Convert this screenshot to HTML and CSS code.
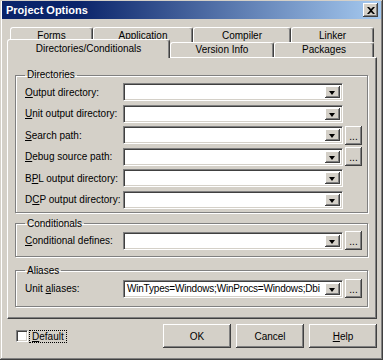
FILE: index.html
```html
<!DOCTYPE html>
<html lang="en">
  <head>
    <meta charset="UTF-8" />
    <title>Project Options</title>
    <link rel="stylesheet" href="styles.css">
  </head>
  <body>
    <div class="window">
      <div class="titlebar">
        <span class="title">Project Options</span>
        <button class="close-btn" aria-label="Close">
          <svg width="8" height="7" viewBox="0 0 8 7">
            <path d="M0 0h2l2 2 2-2h2L5 3.5 8 7H6L4 5 2 7H0l3-3.5z" fill="#000" />
          </svg>
        </button>
      </div>

      <div class="client">
        <div class="tabs">
          <div class="tab-row back">
            <div class="tab tab-forms">Forms</div>
            <div class="tab tab-application">Application</div>
            <div class="tab tab-compiler">Compiler</div>
            <div class="tab tab-linker">Linker</div>
          </div>
          <div class="tab-row front">
            <div class="tab active tab-dirs">Directories/Conditionals</div>
            <div class="tab tab-version">Version Info</div>
            <div class="tab tab-packages">Packages</div>
          </div>
        </div>

        <div class="panel">
          <fieldset class="group group-dirs">
            <legend>Directories</legend>
            <div class="row">
              <label><u>O</u>utput directory:</label>
              <div class="combo"><span class="value"></span><span class="drop"></span></div>
            </div>
            <div class="row">
              <label><u>U</u>nit output directory:</label>
              <div class="combo"><span class="value"></span><span class="drop"></span></div>
            </div>
            <div class="row">
              <label><u>S</u>earch path:</label>
              <div class="combo"><span class="value"></span><span class="drop"></span></div>
              <button class="browse">...</button>
            </div>
            <div class="row">
              <label><u>D</u>ebug source path:</label>
              <div class="combo"><span class="value"></span><span class="drop"></span></div>
              <button class="browse">...</button>
            </div>
            <div class="row">
              <label>B<u>P</u>L output directory:</label>
              <div class="combo"><span class="value"></span><span class="drop"></span></div>
            </div>
            <div class="row">
              <label>D<u>C</u>P output directory:</label>
              <div class="combo"><span class="value"></span><span class="drop"></span></div>
            </div>
          </fieldset>

          <fieldset class="group group-cond">
            <legend>Conditionals</legend>
            <div class="row">
              <label><u>C</u>onditional defines:</label>
              <div class="combo"><span class="value"></span><span class="drop"></span></div>
              <button class="browse">...</button>
            </div>
          </fieldset>

          <fieldset class="group group-alias">
            <legend>Aliases</legend>
            <div class="row">
              <label>Unit <u>a</u>liases:</label>
              <div class="combo">
                <span class="value">WinTypes=Windows;WinProcs=Windows;Dbi</span>
                <span class="drop"></span>
              </div>
              <button class="browse">...</button>
            </div>
          </fieldset>
        </div>

        <div class="footer">
          <label class="check">
            <span class="check-box"></span>
            <span class="check-label"><u>D</u>efault</span>
          </label>
          <div class="buttons">
            <button class="btn">OK</button>
            <button class="btn">Cancel</button>
            <button class="btn"><u>H</u>elp</button>
          </div>
        </div>
      </div>
    </div>
  </body>
</html>
```

FILE: styles.css
```css
:root {
  --clr-face: #d4d0c8;
  --clr-shadow: #808080;
  --clr-dark: #404040;
  --clr-light: #ffffff;
}

* {
  margin: 0;
  padding: 0;
  box-sizing: border-box;
}

body {
  font-family: "Liberation Sans", Arial, sans-serif;
  font-size: 10px;
  color: #000;
  background-color: var(--clr-face);
}

button {
  font: inherit;
  color: inherit;
}

.window {
  width: 383px;
  height: 360px;
  padding: 1px 2px 2px 2px;
  background-color: var(--clr-face);
  box-shadow: inset -1px -1px var(--clr-dark), inset 1px 1px var(--clr-face),
    inset -2px -2px var(--clr-shadow), inset 2px 2px var(--clr-light);
}

/* title bar */

.titlebar {
  height: 18px;
  display: flex;
  align-items: center;
  padding-left: 4px;
  background: linear-gradient(to right, #0a246a 20%, #a6caf0);
}

.title {
  flex: 1;
  color: #fff;
  font-size: 11px;
  font-weight: bold;
}

.close-btn {
  width: 15px;
  height: 14px;
  margin-right: 3px;
  display: flex;
  align-items: center;
  justify-content: center;
  border: none;
  background-color: var(--clr-face);
  box-shadow: inset -1px -1px var(--clr-dark), inset 1px 1px var(--clr-light),
    inset -2px -2px var(--clr-shadow);
}

/* tabs */

.client {
  padding: 0 4px 0 5px;
}

.tabs {
  margin-top: 8px;
}

.tab-row {
  display: flex;
  height: 15px;
}

.tab-row.back {
  padding-left: 3px;
}

.tab-row.back .tab {
  padding-top: 2px;
}

.tab-row.front {
  align-items: flex-end;
}

.tab {
  height: 15px;
  padding-top: 1px;
  text-align: center;
  line-height: 12px;
  white-space: nowrap;
  background-color: var(--clr-face);
  border: 1px solid;
  border-bottom: none;
  border-color: var(--clr-light) var(--clr-dark) transparent var(--clr-light);
  border-radius: 3px 3px 0 0;
  box-shadow: inset -1px 0 var(--clr-shadow);
}

.tab-forms { width: 83px; }
.tab-application { width: 100px; }
.tab-compiler { width: 98px; }
.tab-linker { width: 83px; }

.tab-dirs { width: 163px; }
.tab-version { width: 104px; }
.tab-packages { width: 100px; }

.tab.active {
  height: 19px;
  margin-bottom: -1px;
  padding-top: 3px;
}

/* tab page */

.panel {
  height: 262px;
  padding: 11px 9px 0 7px;
  border: 1px solid;
  border-color: var(--clr-light) var(--clr-dark) var(--clr-dark) var(--clr-light);
  box-shadow: inset -1px -1px var(--clr-shadow);
}

.group {
  border: 1px solid var(--clr-shadow);
  box-shadow: inset 1px 1px var(--clr-light), 1px 1px var(--clr-light);
  padding: 2px 5px 3px 9px;
}

.group legend {
  padding: 0 2px;
  line-height: 12px;
}

.group-dirs {
  display: flex;
  flex-direction: column;
  gap: 3.6px;
}

.group-cond {
  margin-top: 5px;
  padding-bottom: 6px;
}

.group-alias {
  margin-top: 8px;
  padding-top: 3px;
  padding-bottom: 8px;
}

.row {
  display: flex;
  align-items: center;
  height: 18px;
}

.row label {
  width: 98px;
  white-space: nowrap;
}

.combo {
  width: 220px;
  height: 18px;
  display: flex;
  align-items: stretch;
  background-color: #fff;
  border: 1px solid;
  border-color: var(--clr-shadow) var(--clr-light) var(--clr-light) var(--clr-shadow);
  box-shadow: inset 1px 1px var(--clr-dark), inset -1px -1px var(--clr-face);
  padding: 2px;
}

.combo .value {
  flex: 1;
  overflow: hidden;
  white-space: nowrap;
  padding-left: 1px;
  line-height: 12px;
  letter-spacing: -0.2px;
}

.combo .drop {
  width: 15px;
  margin-left: 2px;
  position: relative;
  background-color: var(--clr-face);
  box-shadow: inset -1px -1px var(--clr-dark), inset 1px 1px var(--clr-light),
    inset -2px -2px var(--clr-shadow);
}

.combo .drop::after {
  content: "";
  position: absolute;
  left: 4px;
  top: 5px;
  border-left: 3.5px solid transparent;
  border-right: 3.5px solid transparent;
  border-top: 4px solid #000;
}

.browse {
  width: 17px;
  height: 19px;
  margin-left: 2px;
  line-height: 17px;
  padding-top: 2px;
  border: none;
  background-color: var(--clr-face);
  box-shadow: inset -1px -1px var(--clr-dark), inset 1px 1px var(--clr-light),
    inset -2px -2px var(--clr-shadow);
}

/* bottom row */

.footer {
  display: flex;
  align-items: center;
  margin-top: 5px;
  height: 24px;
}

.check {
  display: flex;
  align-items: center;
  margin-left: 9px;
}

.check-box {
  width: 12px;
  height: 12px;
  background-color: #fff;
  border: 1px solid;
  border-color: var(--clr-shadow) var(--clr-light) var(--clr-light) var(--clr-shadow);
  box-shadow: inset 1px 1px var(--clr-dark), inset -1px -1px var(--clr-face);
}

.check-label {
  margin-left: 2px;
  padding: 0 2px;
  line-height: 11px;
  outline: 1px dotted #000;
}

.buttons {
  margin-left: auto;
  display: flex;
  gap: 5px;
}

.btn {
  width: 68px;
  height: 24px;
  border: none;
  background-color: var(--clr-face);
  box-shadow: inset -1px -1px var(--clr-dark), inset 1px 1px var(--clr-light),
    inset -2px -2px var(--clr-shadow);
}
```
